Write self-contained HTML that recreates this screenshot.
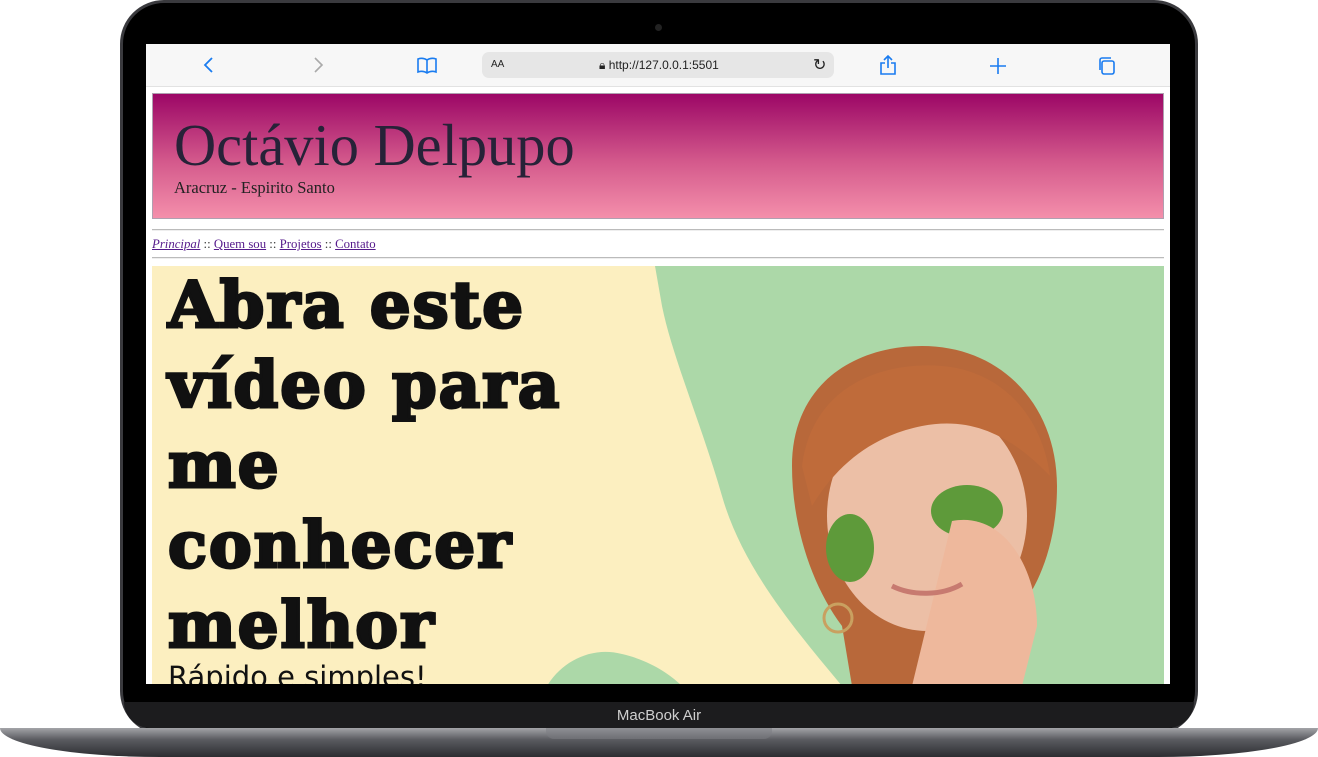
<!DOCTYPE html>
<html><head><meta charset="utf-8"><style>
*{margin:0;padding:0;box-sizing:border-box}
body{width:1318px;height:757px;background:#fff;position:relative;overflow:hidden;font-family:"Liberation Serif",serif}
.body{position:absolute;left:120px;top:0;width:1078px;height:735px;background:#000;border-radius:44px;border:3px solid #3a3a3e}
.cam{position:absolute;left:655px;top:24px;width:7px;height:7px;border-radius:50%;background:#222}
.screen{position:absolute;left:146px;top:44px;width:1024px;height:640px;background:#fff;overflow:hidden}
.bar{position:absolute;left:0;top:0;width:1024px;height:43px;background:#f7f7f7;border-bottom:1px solid #e2e2e2}
.url{position:absolute;left:336px;top:8px;width:352px;height:26px;background:#e6e6e6;border-radius:7px;font-family:"Liberation Sans",sans-serif;font-size:12px;color:#222}
.ic{position:absolute;top:11px;color:#1a7cf0;font-family:"Liberation Sans",sans-serif;font-size:20px;line-height:20px}
.hdr{position:absolute;left:6px;top:49px;width:1012px;height:126px;background:linear-gradient(#9c0766,#d45a8c 55%,#f48fab);border:1px solid #b0a0b0}
.hdr h1{position:absolute;left:21px;top:20px;font-weight:normal;font-size:59px;color:#272238;line-height:62px;transform:scaleX(0.99);transform-origin:left}
.hdr p{position:absolute;left:21px;top:84px;font-size:16.5px;color:#222}
.hr{position:absolute;left:6px;width:1012px;height:2px;border-top:1px solid #bbb;border-bottom:1px solid #eee}
.nav{position:absolute;left:6px;top:193px;font-size:12.8px;color:#333}
.nav a{color:#551a8b}
.ban{position:absolute;left:6px;top:222px;width:1012px;height:420px;background:#fcefc0;overflow:hidden}
.big{position:absolute;left:16px;top:0px;font-family:"DejaVu Serif",serif;font-weight:900;font-size:64px;line-height:80px;color:#111;letter-spacing:2px;-webkit-text-stroke:3px #111}
.small{position:absolute;left:16px;top:394px;font-family:"DejaVu Sans",sans-serif;font-size:29px;color:#111}
.bottom{position:absolute;left:124px;top:702px;width:1070px;height:26px;background:#1c1c1e;border-radius:0 0 30px 30px;color:#cfcfcf;font-family:"Liberation Sans",sans-serif;font-size:15px;text-align:center;line-height:28px}
.base{position:absolute;left:0;top:728px;width:1318px;height:29px;background:linear-gradient(#a3a4a8,#5a5b60 40%,#2c2d31);border-radius:0 0 160px 160px/0 0 29px 29px}
.notch{position:absolute;left:546px;top:728px;width:226px;height:11px;background:linear-gradient(#8e8f94,#6e6f74);border-radius:0 0 8px 8px}
</style></head><body>
<div class="body"></div><div class="cam"></div>
<div class="screen">
 <div class="bar">
  <svg style="position:absolute;left:57px;top:12px" width="12" height="18" viewBox="0 0 12 18"><path d="M9 2L2 9l7 7" fill="none" stroke="#1a7cf0" stroke-width="1.8"/></svg>
  <svg style="position:absolute;left:166px;top:12px" width="12" height="18" viewBox="0 0 12 18"><path d="M3 2l7 7-7 7" fill="none" stroke="#aaa" stroke-width="1.6"/></svg>
  <svg style="position:absolute;left:271px;top:13px" width="20" height="17" viewBox="0 0 20 17"><path d="M10 3C7 1 4 1 1 2v13c3-1 6-1 9 1 3-2 6-2 9-1V2c-3-1-6-1-9 1zM10 3v13" fill="none" stroke="#1a7cf0" stroke-width="1.6"/></svg>
  <div class="url"><span style="position:absolute;left:9px;top:7px;font-size:10px">AA</span><span style="position:absolute;left:117px;top:6px">&#x1F512;&#xFE0E; http://127.0.0.1:5501</span><span style="position:absolute;left:331px;top:3px;font-size:16px">&#x21BB;</span></div>
  <svg style="position:absolute;left:733px;top:10px" width="18" height="22" viewBox="0 0 18 22"><path d="M9 14V2M5 6l4-4 4 4M6 9H2v11h14V9h-4" fill="none" stroke="#1a7cf0" stroke-width="1.6"/></svg>
  <svg style="position:absolute;left:843px;top:13px" width="18" height="18" viewBox="0 0 18 18"><path d="M9 1v16M1 9h16" stroke="#1a7cf0" stroke-width="1.6"/></svg>
  <svg style="position:absolute;left:951px;top:12px" width="20" height="20" viewBox="0 0 20 20"><rect x="5" y="5" width="12" height="13" rx="2" fill="none" stroke="#1a7cf0" stroke-width="1.6"/><path d="M3 14V4a2 2 0 0 1 2-2h9" fill="none" stroke="#1a7cf0" stroke-width="1.6"/></svg>
 </div>
 <div class="hdr"><h1>Octávio Delpupo</h1><p>Aracruz - Espirito Santo</p></div>
 <div class="hr" style="top:185px"></div>
 <div class="nav"><a href="#"><i>Principal</i></a> :: <a href="#">Quem sou</a> :: <a href="#">Projetos</a> :: <a href="#">Contato</a></div>
 <div class="hr" style="top:213px"></div>
 <div class="ban">
  <svg style="position:absolute;left:0;top:0" width="1012" height="420" viewBox="0 0 1012 420">
   <path d="M503 0L1012 0L1012 420L690 420C640 360 590 300 570 230C550 160 520 90 510 40Z" fill="#acd8a8"/>
   <path d="M395 420C410 395 440 380 470 388C500 395 520 410 530 420Z" fill="#acd8a8"/>
   <path d="M640 200C640 120 700 80 770 80C850 80 905 140 905 220C905 280 885 320 870 340L860 420H700L690 360C660 320 640 260 640 200Z" fill="#b8683a"/>
   <ellipse cx="775" cy="250" rx="100" ry="115" fill="#ecbfa6"/>
   <path d="M650 200C660 120 730 95 790 100C850 105 890 150 898 210C860 170 820 150 770 160C730 168 690 190 660 240Z" fill="#bf6b3a"/>
   <ellipse cx="698" cy="282" rx="24" ry="34" fill="#5e9a3a"/>
   <ellipse cx="815" cy="245" rx="36" ry="26" fill="#5e9a3a"/>
   <path d="M800 255C850 245 885 300 885 360L870 420H760Z" fill="#eeb89c"/>
   <path d="M740 320C760 330 790 330 810 318" fill="none" stroke="#c77a70" stroke-width="5"/>
   <circle cx="686" cy="352" r="14" fill="none" stroke="#c9a060" stroke-width="3"/>
  </svg>
  <div class="big">Abra este<br>vídeo para<br>me<br>conhecer<br>melhor</div>
  <div class="small">Rápido e simples!</div>
 </div>
</div>
<div class="bottom">MacBook Air</div>
<div class="base"></div><div class="notch"></div>
</body></html>
